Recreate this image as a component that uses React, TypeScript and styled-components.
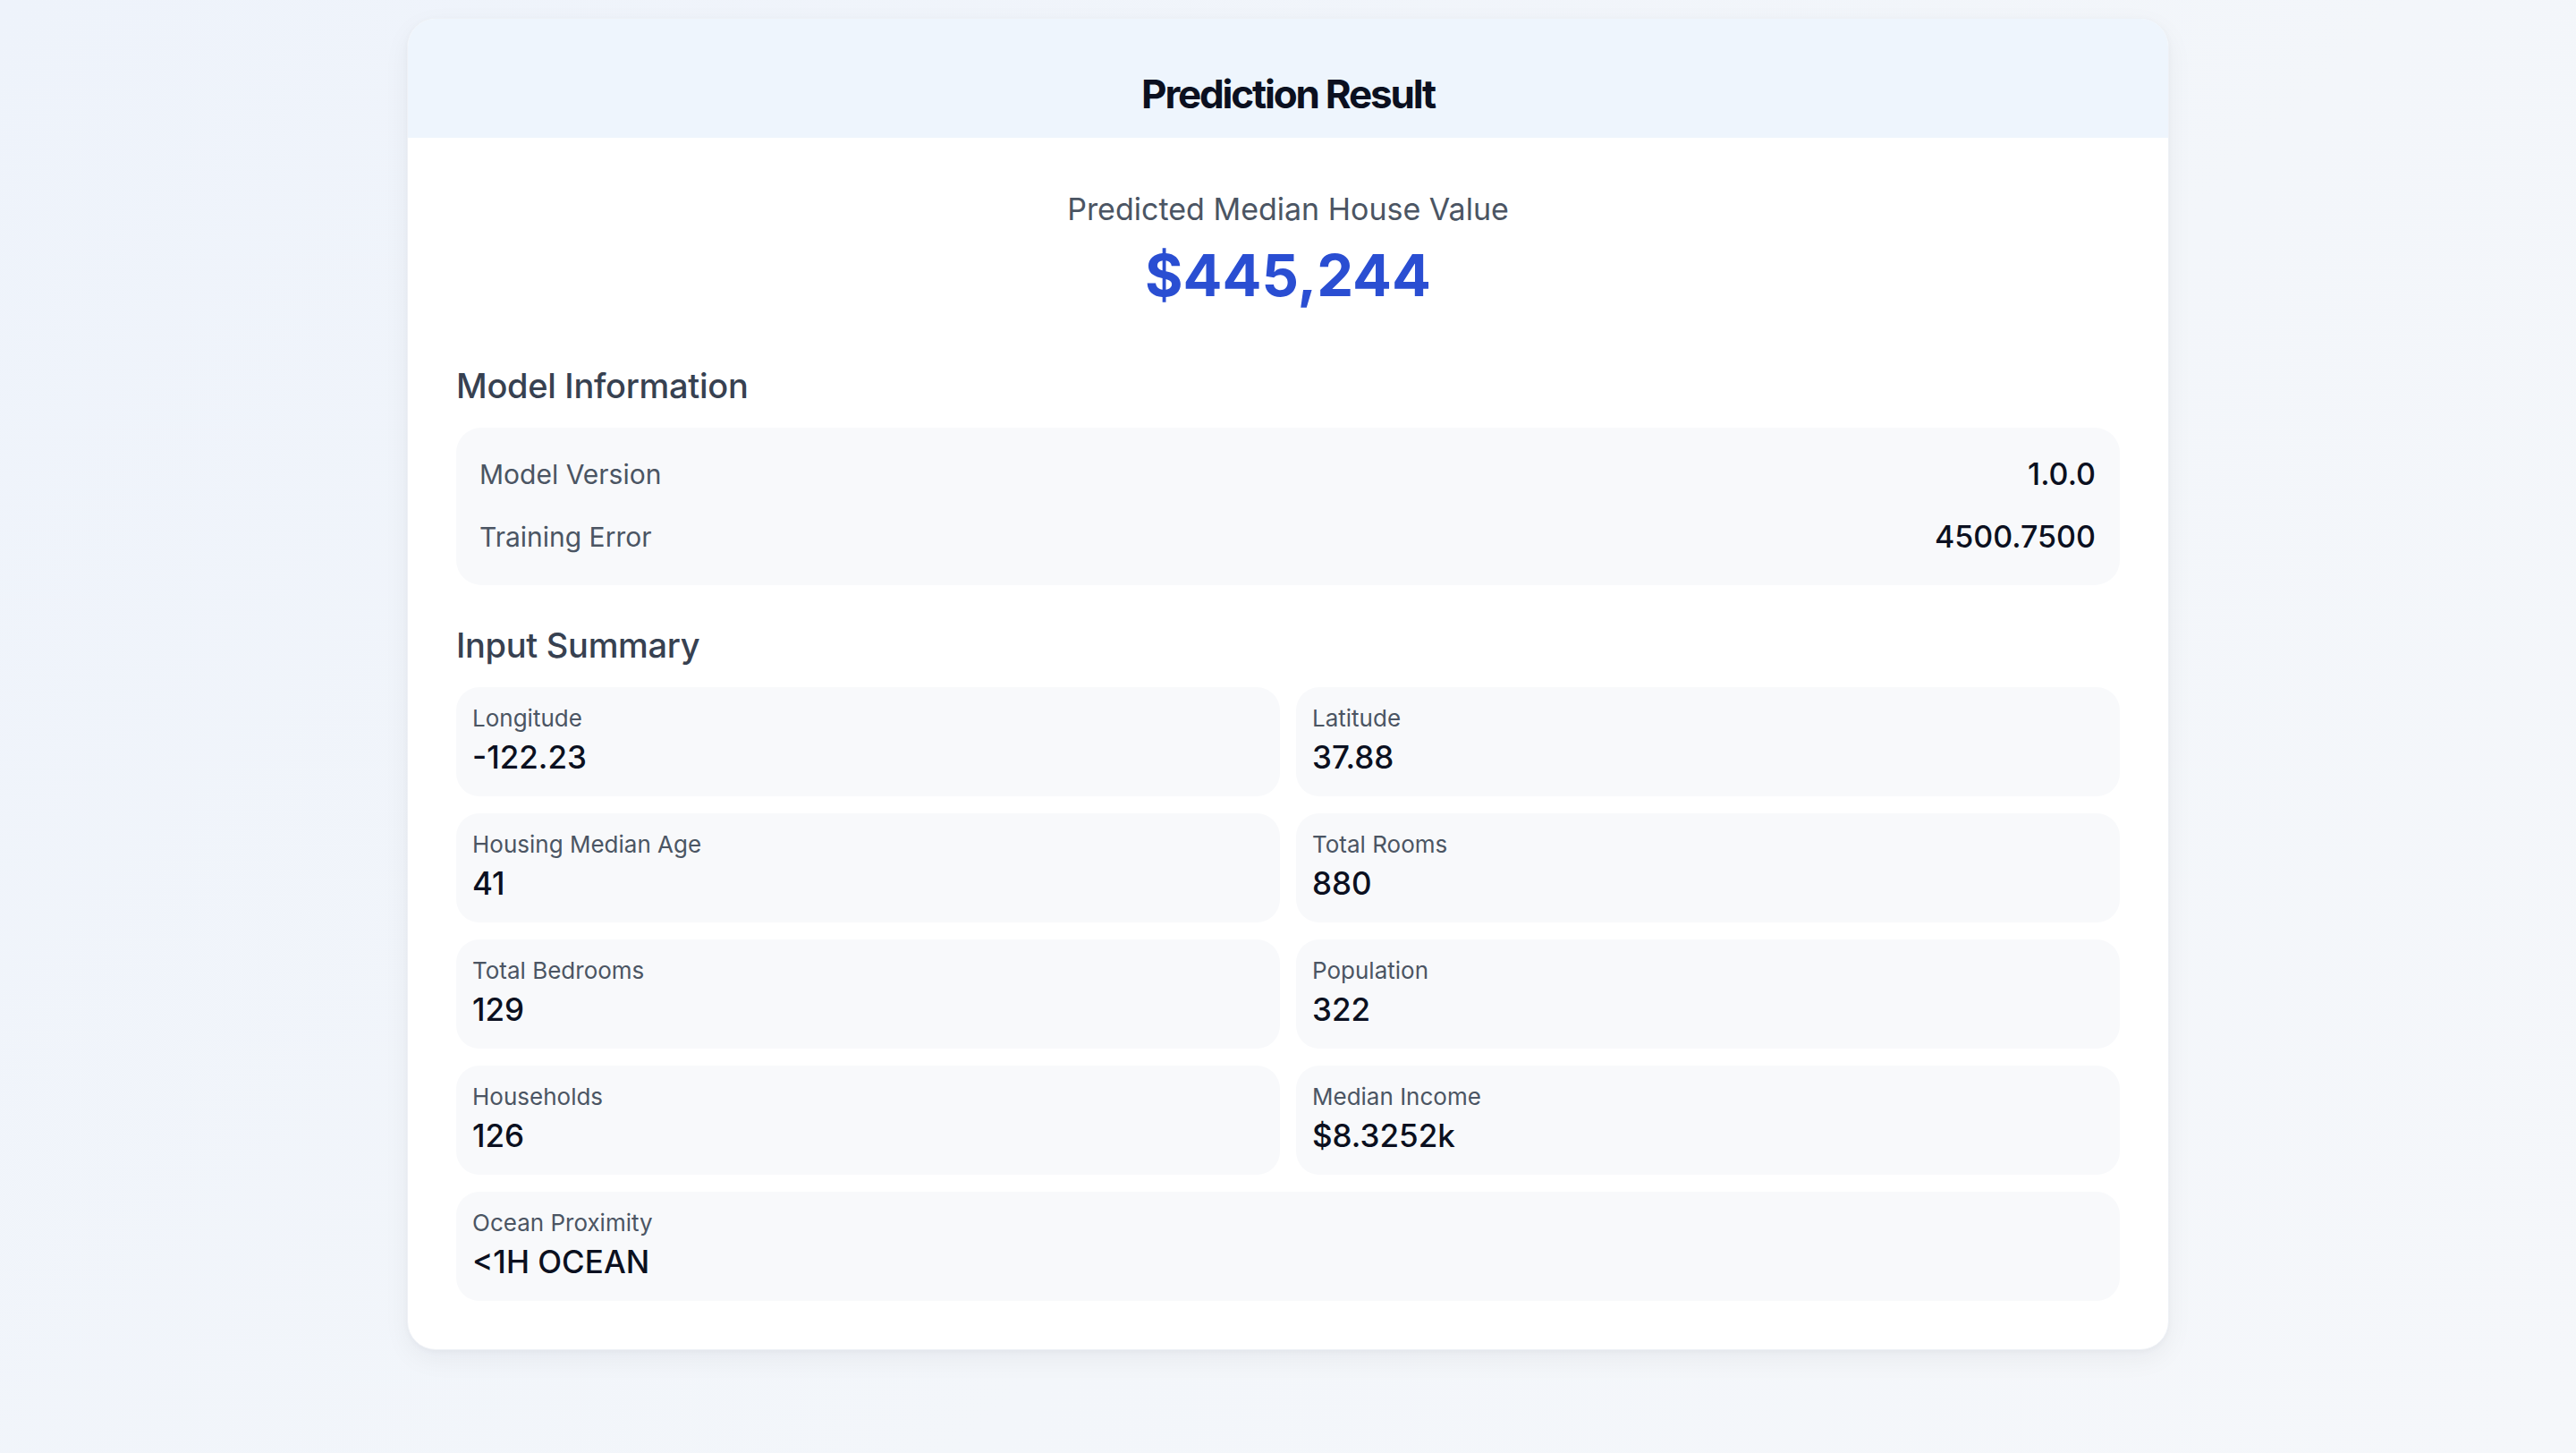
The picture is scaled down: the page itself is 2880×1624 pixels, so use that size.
import React from 'react';
import styled, { createGlobalStyle } from 'styled-components';

const GlobalStyle = createGlobalStyle`
  html, body {
    margin: 0;
    padding: 0;
  }
  body {
    font-family: Inter, 'Noto Sans', 'Liberation Sans', sans-serif;
    background: linear-gradient(135deg, #eef3fb 0%, #f3f6fa 60%, #f5f7fa 100%);
    min-height: 1624px;
  }
`;

const Page = styled.div`
  display: flex;
  justify-content: center;
  padding: 20px 0 60px;
`;

const Card = styled.div`
  width: 1970px;
  box-sizing: border-box;
  background: #fff;
  border: 1px solid #eef1f6;
  border-radius: 32px;
  overflow: hidden;
  box-shadow: 0 10px 30px rgba(15, 23, 42, 0.05), 0 2px 6px rgba(15, 23, 42, 0.03);
`;

const Header = styled.div`
  background: #eef5fd;
  padding: 58px 0 22px;
  text-align: center;
`;

const Title = styled.h1`
  margin: 0;
  font-size: 44px;
  line-height: 53px;
  font-weight: 700;
  letter-spacing: -2.2px;
  color: #0b1020;
`;

const Body = styled.div`
  padding: 55px 54px 54px;
`;

const Hero = styled.div`
  display: flex;
  flex-direction: column;
  align-items: center;
  gap: 10px;
`;

const HeroLabel = styled.div`
  font-size: 34px;
  line-height: 50px;
  color: #4b5563;
`;

const HeroValue = styled.div`
  font-size: 65px;
  line-height: 77px;
  font-weight: 700;
  color: #2a4ed2;
`;

const SectionTitle = styled.h2<{ $top: number }>`
  margin: ${(p) => p.$top}px 0 22px;
  font-size: 38px;
  line-height: 49px;
  font-weight: 500;
  letter-spacing: -0.3px;
  color: #374151;
`;

const InfoBox = styled.div`
  background: #f8f9fb;
  border-radius: 28px;
  padding: 28px 27px 30px 26px;
  display: flex;
  flex-direction: column;
  gap: 22px;
`;

const InfoRow = styled.div`
  display: flex;
  justify-content: space-between;
  align-items: center;
`;

const InfoLabel = styled.span`
  font-size: 30px;
  line-height: 48px;
  color: #4b5563;
`;

const InfoValue = styled.span`
  font-size: 34px;
  line-height: 48px;
  font-weight: 500;
  color: #0b1020;
`;

const Grid = styled.div`
  display: grid;
  grid-template-columns: 1fr 1fr;
  column-gap: 18px;
  row-gap: 19px;
`;

const Stat = styled.div<{ $wide?: boolean }>`
  grid-column: ${(p) => (p.$wide ? '1 / -1' : 'auto')};
  background: #f8f9fb;
  border-radius: 26px;
  padding: 16px 18px 19px;
  display: flex;
  flex-direction: column;
`;

const StatLabel = styled.span`
  font-size: 26px;
  line-height: 38px;
  color: #4b5563;
`;

const StatValue = styled.span`
  font-size: 35px;
  line-height: 49px;
  font-weight: 500;
  color: #0b1020;
`;

const inputs: { label: string; value: string; wide?: boolean }[] = [
  { label: 'Longitude', value: '-122.23' },
  { label: 'Latitude', value: '37.88' },
  { label: 'Housing Median Age', value: '41' },
  { label: 'Total Rooms', value: '880' },
  { label: 'Total Bedrooms', value: '129' },
  { label: 'Population', value: '322' },
  { label: 'Households', value: '126' },
  { label: 'Median Income', value: '$8.3252k' },
  { label: 'Ocean Proximity', value: '<1H OCEAN', wide: true },
];

const App: React.FC = () => {
  return (
    <>
      <GlobalStyle />
      <Page>
        <Card>
          <Header>
            <Title>Prediction Result</Title>
          </Header>
          <Body>
            <Hero>
              <HeroLabel>Predicted Median House Value</HeroLabel>
              <HeroValue>$445,244</HeroValue>
            </Hero>

            <SectionTitle $top={61}>Model Information</SectionTitle>
            <InfoBox>
              <InfoRow>
                <InfoLabel>Model Version</InfoLabel>
                <InfoValue>1.0.0</InfoValue>
              </InfoRow>
              <InfoRow>
                <InfoLabel>Training Error</InfoLabel>
                <InfoValue>4500.7500</InfoValue>
              </InfoRow>
            </InfoBox>

            <SectionTitle $top={43}>Input Summary</SectionTitle>
            <Grid>
              {inputs.map((item) => (
                <Stat key={item.label} $wide={item.wide}>
                  <StatLabel>{item.label}</StatLabel>
                  <StatValue>{item.value}</StatValue>
                </Stat>
              ))}
            </Grid>
          </Body>
        </Card>
      </Page>
    </>
  );
};

export default App;
